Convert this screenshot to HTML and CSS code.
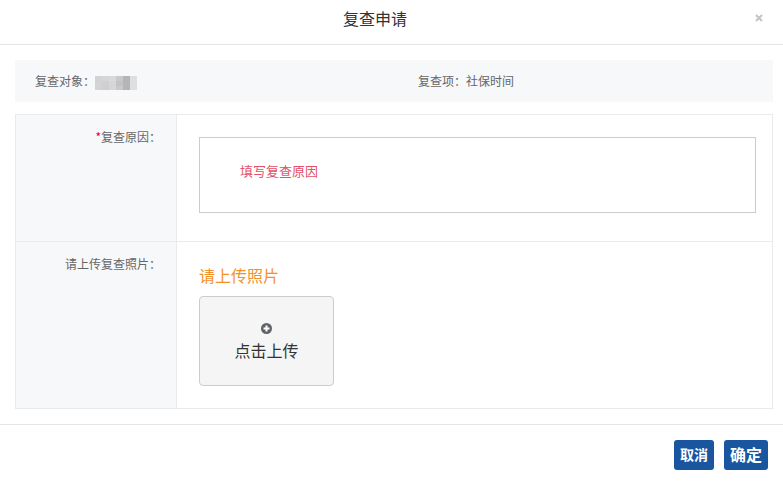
FILE: index.html
```html
<!DOCTYPE html>
<html lang="zh-CN">
<head>
<meta charset="utf-8">
<title>复查申请</title>
<link rel="stylesheet" href="styles.css">
</head>
<body>
<form class="dialog">
  <header class="dialog-header">
    <h1 class="dialog-title">复查申请</h1>
    <button type="button" class="close" aria-label="关闭">
      <svg width="8" height="8" viewBox="0 0 8 8"><path d="M1 1l6 6M7 1L1 7" stroke="#c4c4c4" stroke-width="2" fill="none"/></svg>
    </button>
  </header>

  <div class="dialog-body">
    <div class="summary">
      <div class="summary-item">复查对象：
        <!-- masked name -->
        <svg class="mask" width="42" height="14" viewBox="0 0 42 14">
          <rect width="42" height="14" fill="#d6d6d8"/>
          <rect width="7" height="14" fill="#d3d3d5"/>
          <rect x="7" y="5" width="7" height="9" fill="#cfcfd1"/>
          <rect x="14" width="7" height="5" fill="#d9d9da"/>
          <rect x="21" width="7" height="14" fill="#c9c9cb"/>
          <rect x="21" y="5" width="7" height="5" fill="#c3c3c5"/>
          <rect x="28" width="7" height="14" fill="#b5b5b8"/>
          <rect x="35" width="7" height="14" fill="#dedfe1"/>
        </svg>
      </div>
      <div class="summary-item">复查项：社保时间</div>
    </div>

    <div class="fields">
      <div class="row row-reason">
        <label class="label" for="reason"><span class="required">*</span>复查原因：</label>
        <div class="value">
          <textarea class="reason" id="reason" placeholder="填写复查原因" required></textarea>
        </div>
      </div>
      <div class="row row-photo">
        <label class="label" for="upload">请上传复查照片：</label>
        <div class="value">
          <p class="hint">请上传照片</p>
          <button type="button" class="upload" id="upload">
            <svg width="11" height="11" viewBox="0 0 11 11"><circle cx="5.5" cy="5.5" r="5.5" fill="#5f6266"/><path d="M5.5 2.5v6M2.5 5.5h6" stroke="#fff" stroke-width="2"/></svg>
            <span>点击上传</span>
          </button>
        </div>
      </div>
    </div>
  </div>

  <footer class="dialog-footer">
    <button type="button" class="btn btn-cancel">取消</button>
    <button type="submit" class="btn btn-ok">确定</button>
  </footer>
</form>
</body>
</html>
```

FILE: styles.css
```css
* {
  box-sizing: border-box;
}

body {
  margin: 0;
  background: #fff;
  color: #666;
  font-family: "Noto Sans CJK SC", sans-serif;
  font-size: 12px;
  line-height: 18px;
}

button, textarea {
  font-family: inherit;
}

.dialog-header {
  display: flex;
  align-items: center;
  padding-bottom: 8px;
  border-bottom: 1px solid #e5e5e5;
}

.dialog-title {
  flex: 1;
  margin: 0;
  color: #333;
  font-size: 16px;
  font-weight: 400;
  line-height: 36px;
  text-align: center;
}

.close {
  display: flex;
  width: 33px;
  padding: 4px 5px;
  border: 0;
  background: none;
}

.dialog-body {
  padding: 15px 10px 15px 15px;
}

.summary {
  display: grid;
  grid-template-columns: 1fr 1fr;
  gap: 28px;
  padding: 12px 0 12px 20px;
  background: #f7f8fa;
}

.summary-item {
  display: flex;
  align-items: center;
}

.mask {
  margin-top: 4px;
}

.fields {
  margin-top: 12px;
  border: 1px solid #e9eaec;
}

.row {
  display: flex;
}

.row + .row {
  border-top: 1px solid #e9eaec;
}

.label {
  flex: none;
  width: 161px;
  padding: 13px 15px;
  border-right: 1px solid #e9eaec;
  background: #f7f8fa;
  text-align: right;
}

.required {
  color: #e60012;
}

.value {
  flex: 1;
  padding: 22px 16px 22px 22px;
}

.row-reason .value {
  padding-bottom: 28px;
}

.reason {
  display: block;
  width: 100%;
  height: 76px;
  padding: 23px 40px;
  border: 1px solid #ccc;
  border-radius: 0;
  color: #666;
  font-size: 13px;
  line-height: 20px;
  resize: none;
}

.reason::placeholder {
  color: #e3506a;
}

.hint {
  margin: 0 0 10px;
  color: #f39128;
  font-size: 16px;
  line-height: 22px;
}

.upload {
  display: flex;
  flex-direction: column;
  align-items: center;
  justify-content: center;
  gap: 4px;
  width: 135px;
  height: 90px;
  padding: 2px 0 0;
  border: 1px solid #ccc;
  border-radius: 4px;
  background: #f5f5f5;
  color: #333;
  font-size: 16px;
  line-height: 24px;
}

.dialog-footer {
  display: flex;
  justify-content: flex-end;
  gap: 10px;
  padding: 15px;
  border-top: 1px solid #e5e5e5;
}

.btn {
  height: 30px;
  padding: 0 6px 3px;
  border: 0;
  border-radius: 3px;
  background: #1a569f;
  color: #fff;
  font-size: 14px;
  font-weight: 700;
}

.btn-ok {
  font-size: 16px;
}
```
